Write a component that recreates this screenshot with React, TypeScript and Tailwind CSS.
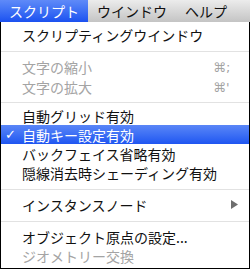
import React from "react";

type RowProps = {
  label: string;
  h: string;
  disabled?: boolean;
  shortcut?: string;
  checked?: boolean;
  active?: boolean;
  submenu?: boolean;
};

function Row({ label, h, disabled, shortcut, checked, active, submenu }: RowProps) {
  const color = active ? "text-white" : disabled ? "text-[#a4a4a4]" : "text-[#111111]";
  return (
    <div
      className={`flex items-center ${h} ${color} ${
        active ? "bg-linear-to-b from-[#5a86f7] to-[#1f55f1]" : ""
      }`}
    >
      <div className="w-[21px] shrink-0 pl-[4px] text-[13px] leading-none font-['DejaVu_Sans',sans-serif]">
        {checked ? "✓" : ""}
      </div>
      <div className="flex-1 text-[14px] leading-none whitespace-nowrap">{label}</div>
      {shortcut && (
        <div className="w-[24px] mr-[12px] text-[13px] leading-none text-[#a4a4a4] font-['DejaVu_Sans',sans-serif]">
          {shortcut}
        </div>
      )}
      {submenu && (
        <div className="mr-[11px] flex items-center">
          <svg width="7" height="9" viewBox="0 0 7 9">
            <polygon points="0,0 7,4.5 0,9" fill="#6e6e6e" />
          </svg>
        </div>
      )}
    </div>
  );
}

function Sep({ h, top }: { h: string; top: string }) {
  return (
    <div className={`${h} ${top}`}>
      <div className="h-px bg-[#e2e2e2]" />
    </div>
  );
}

export default function App() {
  return (
    <div className="w-[250px] h-[269px] bg-white font-['Noto_Sans_CJK_JP','Noto_Sans_CJK_SC',sans-serif] overflow-hidden">
      <div className="flex h-[22px] bg-linear-to-b from-[#ececec] to-[#c4c4c4] text-[14px] leading-none">
        <div className="flex items-center px-[9px] bg-linear-to-b from-[#5f8af8] to-[#1b50f0] text-white">
          スクリプト
        </div>
        <div className="flex items-center px-[9px] text-[#111111]">ウインドウ</div>
        <div className="flex items-center px-[9px] text-[#111111]">ヘルプ</div>
      </div>
      <div className="h-[247px] border-l border-r border-b border-black pt-[3px]">
        <Row label="スクリプティングウインドウ" h="h-[20px]" />
        <Sep h="h-[12px]" top="pt-[6px]" />
        <Row label="文字の縮小" h="h-[20px]" disabled shortcut="⌘;" />
        <Row label="文字の拡大" h="h-[20px]" disabled shortcut="⌘'" />
        <Sep h="h-[9px]" top="pt-[5px]" />
        <Row label="自動グリッド有効" h="h-[19px]" />
        <Row label="自動キー設定有効" h="h-[19px]" checked active />
        <Row label="バックフェイス省略有効" h="h-[19px]" />
        <Row label="隠線消去時シェーディング有効" h="h-[20px]" />
        <Sep h="h-[12px]" top="pt-[6px]" />
        <Row label="インスタンスノード" h="h-[19px]" submenu />
        <Sep h="h-[13px]" top="pt-[7px]" />
        <Row label="オブジェクト原点の設定..." h="h-[19px]" />
        <Row label="ジオメトリー交換" h="h-[20px]" disabled />
      </div>
    </div>
  );
}
